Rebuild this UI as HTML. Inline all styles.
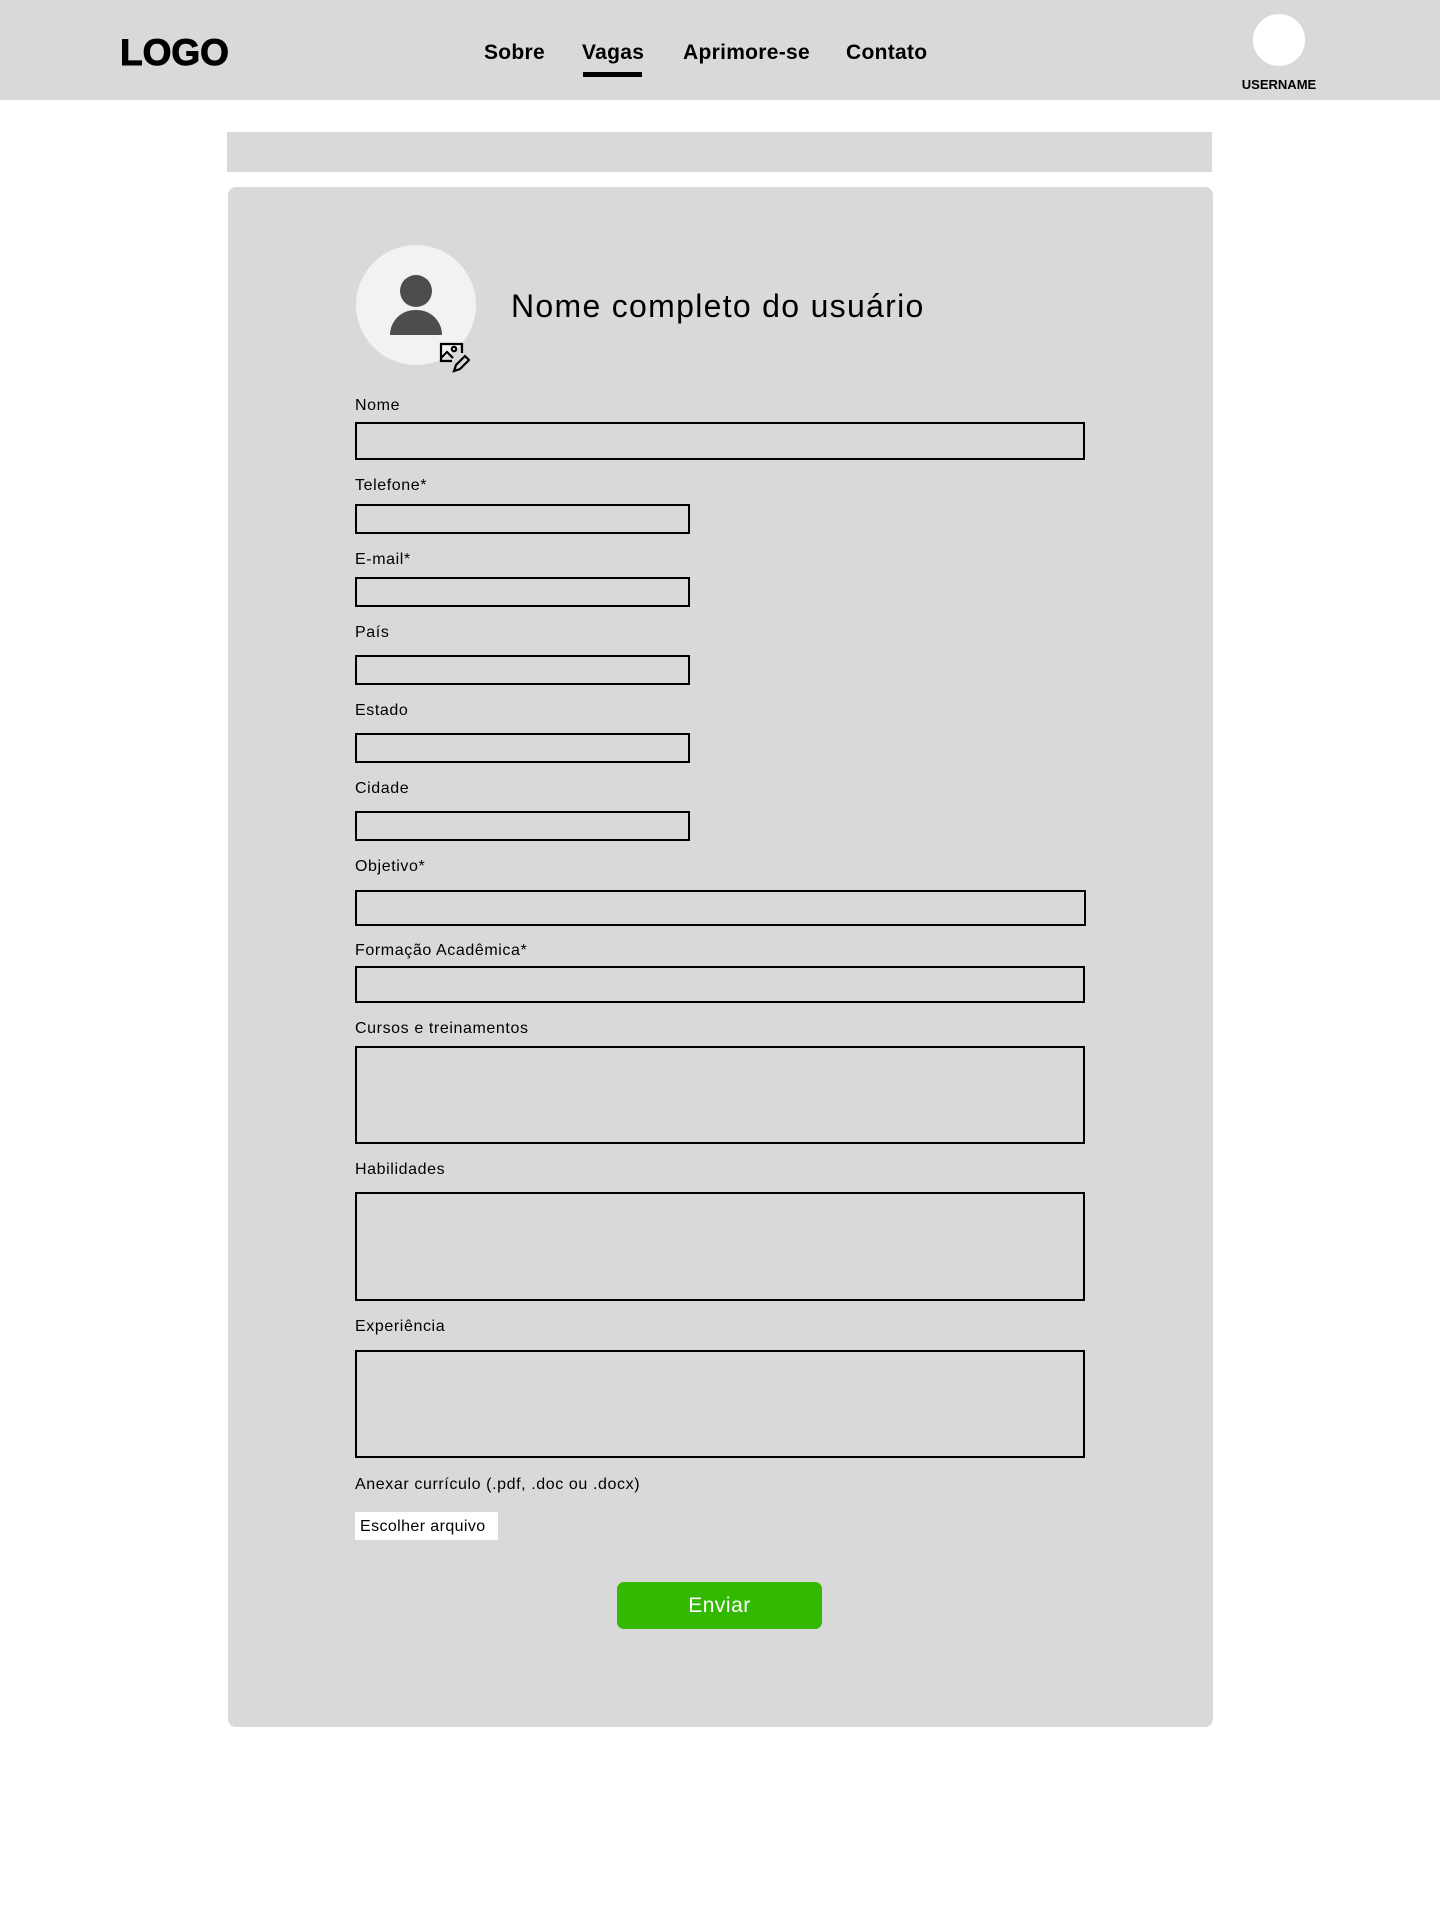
<!DOCTYPE html>
<html><head><meta charset="utf-8"><style>
*{margin:0;padding:0;box-sizing:border-box}
body{width:1440px;height:1913px;background:#fff;font-family:"Liberation Sans",sans-serif;position:relative;color:#000}
.a{position:absolute}
.hdr{left:0;top:0;width:1440px;height:100px;background:#d9d9d9}
.nav{font-weight:bold;font-size:21px;top:41px;letter-spacing:0.3px}
.lbl{font-size:16px;left:355px;letter-spacing:0.6px}
.in{border:2px solid #000;left:355px;background:#d9d9d9}
</style></head><body>
<div class="a hdr"></div>
<div class="a" style="left:120px;top:32px;font-size:37px;font-weight:900;letter-spacing:0px;-webkit-text-stroke:1px #000">LOGO</div>
<div class="a nav" style="left:484px">Sobre</div>
<div class="a nav" style="left:582px">Vagas</div>
<div class="a" style="left:583px;top:72px;width:59px;height:5px;background:#000"></div>
<div class="a nav" style="left:683px">Aprimore-se</div>
<div class="a nav" style="left:846px">Contato</div>
<div class="a" style="left:1253px;top:14px;width:52px;height:52px;border-radius:50%;background:#fff"></div>
<div class="a" style="left:1230px;top:77px;width:98px;text-align:center;font-size:13px;font-weight:bold">USERNAME</div>
<div class="a" style="left:227px;top:132px;width:985px;height:40px;background:#d9d9d9"></div>
<div class="a" style="left:228px;top:187px;width:985px;height:1540px;background:#d9d9d9;border-radius:8px"></div>
<div class="a" style="left:356px;top:245px;width:120px;height:120px;border-radius:50%;background:#f2f2f2"></div>
<div class="a" style="left:400px;top:275px;width:32px;height:32px;border-radius:50%;background:#4d4d4d"></div>
<div class="a" style="left:390px;top:310px;width:52px;height:25px;border-radius:26px 26px 0 0;background:#4d4d4d"></div>
<svg class="a" style="left:438px;top:341px" width="32" height="32" viewBox="0 0 32 32" fill="none" stroke="#000" stroke-width="2.2">
<path d="M14 20H3V3h21v9"/><path d="M3 17l6-6 6 6"/><circle cx="16" cy="8" r="2.2"/><path d="M16 30l2-6 9-9 4 4-9 9z"/></svg>
<div class="a" style="left:511px;top:288px;font-size:32px;letter-spacing:1.3px">Nome completo do usuário</div>
<div class="a lbl" style="top:397px">Nome</div>
<div class="a in" style="top:422px;width:730px;height:38px"></div>
<div class="a lbl" style="top:477px">Telefone*</div>
<div class="a in" style="top:504px;width:335px;height:30px"></div>
<div class="a lbl" style="top:551px">E-mail*</div>
<div class="a in" style="top:577px;width:335px;height:30px"></div>
<div class="a lbl" style="top:624px">País</div>
<div class="a in" style="top:655px;width:335px;height:30px"></div>
<div class="a lbl" style="top:702px">Estado</div>
<div class="a in" style="top:733px;width:335px;height:30px"></div>
<div class="a lbl" style="top:780px">Cidade</div>
<div class="a in" style="top:811px;width:335px;height:30px"></div>
<div class="a lbl" style="top:858px">Objetivo*</div>
<div class="a in" style="top:890px;width:731px;height:36px"></div>
<div class="a lbl" style="top:942px">Formação Acadêmica*</div>
<div class="a in" style="top:966px;width:730px;height:37px"></div>
<div class="a lbl" style="top:1020px">Cursos e treinamentos</div>
<div class="a in" style="top:1046px;width:730px;height:98px"></div>
<div class="a lbl" style="top:1161px">Habilidades</div>
<div class="a in" style="top:1192px;width:730px;height:109px"></div>
<div class="a lbl" style="top:1318px">Experiência</div>
<div class="a in" style="top:1350px;width:730px;height:108px"></div>
<div class="a lbl" style="top:1476px">Anexar currículo (.pdf, .doc ou .docx)</div>
<div class="a" style="left:355px;top:1512px;width:143px;height:28px;background:#fff;font-size:16px;padding:6px 0 0 5px;letter-spacing:0.4px">Escolher arquivo</div>
<div class="a" style="left:617px;top:1582px;width:205px;height:47px;background:#34b903;border-radius:7px;color:#fff;font-size:21px;text-align:center;line-height:48px;letter-spacing:0.5px">Enviar</div>
</body></html>
